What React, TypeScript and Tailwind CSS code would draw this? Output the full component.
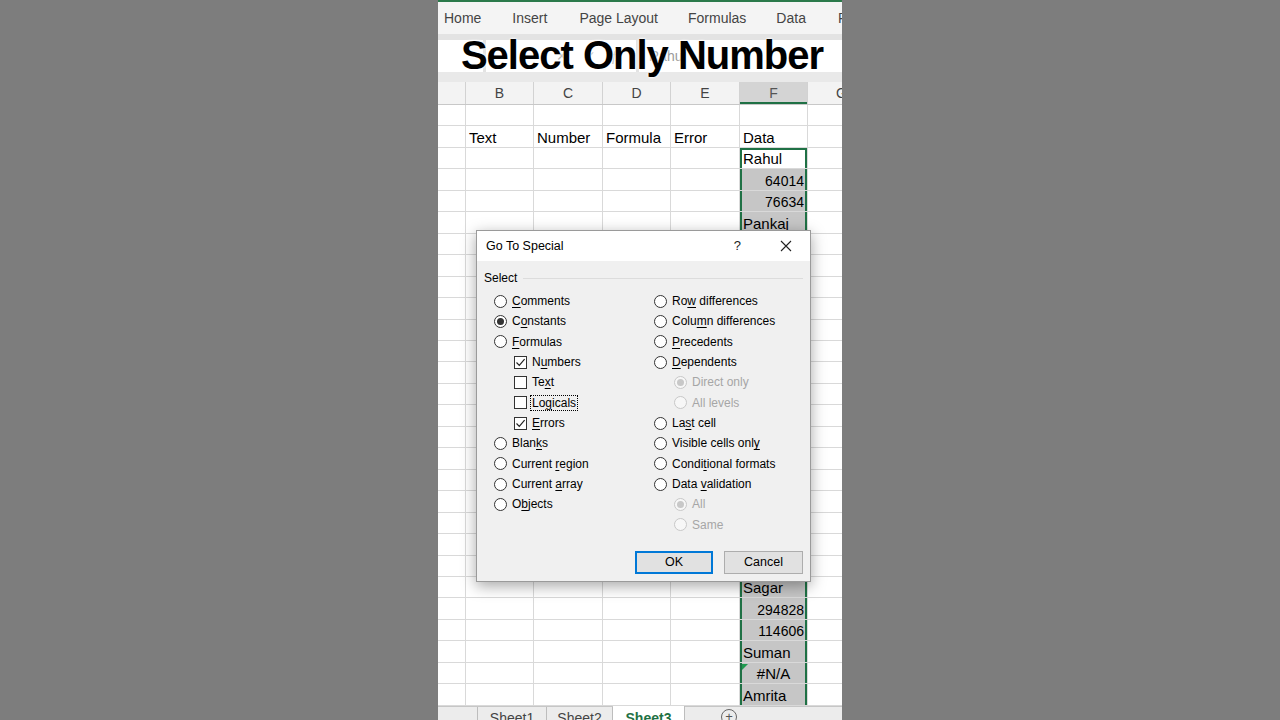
import React from 'react';

const COLS = [28, 68, 69, 68, 69, 68, 68];
const HEADERS = ['', 'B', 'C', 'D', 'E', 'F', 'G'];
const ROW_H = 'h-[21.46px]';

const F_VALUES: string[] = [
  '', 'Data', 'Rahul', '64014', '76634', 'Pankaj', '53120', '88401', 'Ramesh', '#N/A', '41230',
  'Mohan', '98112', '35508', 'Kiran', '#N/A', '72214', 'Vikas', '18876', '63004', 'Neha', '#N/A',
  'Sagar', '294828', '114606', 'Suman', '#N/A', 'Amrita',
];

const ROW1: Record<number, string> = { 1: 'Text', 2: 'Number', 3: 'Formula', 4: 'Error' };

const font = "font-['Liberation_Sans',Arial,sans-serif]";

function Radio({ checked, disabled }: { checked?: boolean; disabled?: boolean }) {
  return (
    <span
      className={`w-[13px] h-[13px] rounded-full border flex items-center justify-center flex-shrink-0 ${
        disabled ? 'border-[#c8c8c8] bg-[#f7f7f7]' : 'border-[#333] bg-white'
      }`}
    >
      {checked && (
        <span className={`w-[7px] h-[7px] rounded-full ${disabled ? 'bg-[#c8c8c8]' : 'bg-[#333]'}`} />
      )}
    </span>
  );
}

function Check({ checked }: { checked?: boolean }) {
  return (
    <span className="w-[13px] h-[13px] border border-[#333] bg-white flex items-center justify-center flex-shrink-0">
      {checked && (
        <svg width="11" height="11" viewBox="0 0 11 11">
          <path d="M1.5 5.5 L4.3 8.3 L9.6 2.2" fill="none" stroke="#222" strokeWidth="1.2" />
        </svg>
      )}
    </span>
  );
}

function Label({ text, k, disabled, focus }: { text: string; k: number; disabled?: boolean; focus?: boolean }) {
  const body =
    k < 0 ? (
      text
    ) : (
      <>
        {text.slice(0, k)}
        <u className="underline decoration-1 underline-offset-2">{text[k]}</u>
        {text.slice(k + 1)}
      </>
    );
  return (
    <span
      className={`text-[12px] leading-[14px] whitespace-nowrap ${disabled ? 'text-[#a6a6a6]' : 'text-black'} ${
        focus ? 'outline-1 outline-dotted outline-black outline-offset-0 px-[1px] -ml-[1px]' : ''
      }`}
    >
      {body}
    </span>
  );
}

type Opt = { t: string; k: number; kind: 'radio' | 'check'; on?: boolean; dis?: boolean; indent?: boolean; focus?: boolean };

const LEFT: Opt[] = [
  { t: 'Comments', k: 0, kind: 'radio' },
  { t: 'Constants', k: 1, kind: 'radio', on: true },
  { t: 'Formulas', k: 0, kind: 'radio' },
  { t: 'Numbers', k: 1, kind: 'check', on: true, indent: true },
  { t: 'Text', k: 2, kind: 'check', indent: true },
  { t: 'Logicals', k: 2, kind: 'check', indent: true, focus: true },
  { t: 'Errors', k: 0, kind: 'check', on: true, indent: true },
  { t: 'Blanks', k: 4, kind: 'radio' },
  { t: 'Current region', k: 8, kind: 'radio' },
  { t: 'Current array', k: 8, kind: 'radio' },
  { t: 'Objects', k: 1, kind: 'radio' },
];

const RIGHT: Opt[] = [
  { t: 'Row differences', k: 2, kind: 'radio' },
  { t: 'Column differences', k: 4, kind: 'radio' },
  { t: 'Precedents', k: 0, kind: 'radio' },
  { t: 'Dependents', k: 0, kind: 'radio' },
  { t: 'Direct only', k: -1, kind: 'radio', on: true, dis: true, indent: true },
  { t: 'All levels', k: -1, kind: 'radio', dis: true, indent: true },
  { t: 'Last cell', k: 2, kind: 'radio' },
  { t: 'Visible cells only', k: 17, kind: 'radio' },
  { t: 'Conditional formats', k: 5, kind: 'radio' },
  { t: 'Data validation', k: 5, kind: 'radio' },
  { t: 'All', k: -1, kind: 'radio', on: true, dis: true, indent: true },
  { t: 'Same', k: -1, kind: 'radio', dis: true, indent: true },
];

function OptionList({ items }: { items: Opt[] }) {
  return (
    <div className="flex flex-col">
      {items.map(o => (
        <div key={o.t} className={`h-[20.33px] flex items-center gap-[5px] ${o.indent ? 'pl-[20px]' : ''}`}>
          {o.kind === 'radio' ? <Radio checked={o.on} disabled={o.dis} /> : <Check checked={o.on} />}
          <Label text={o.t} k={o.k} disabled={o.dis} focus={o.focus} />
        </div>
      ))}
    </div>
  );
}

function GoToSpecial() {
  return (
    <div className={`absolute left-[38px] top-[230px] w-[335px] h-[352px] flex flex-col border border-[#9a9a9a] bg-[#f0f0f0] shadow-[0_4px_14px_rgba(0,0,0,0.35)] ${font}`}>
      <div className="h-[30px] bg-white flex items-center pl-[9px] pr-[18px]">
        <span className="text-[12.5px] text-black flex-1">Go To Special</span>
        <span className="text-[13px] text-[#222] mr-[39px]">?</span>
        <svg width="12" height="12" viewBox="0 0 12 12">
          <path d="M1 1 L11 11 M11 1 L1 11" stroke="#222" strokeWidth="1.1" />
        </svg>
      </div>
      <div className="flex-1 flex flex-col px-[7px] pt-[10px]">
        <div className="flex items-center gap-[6px]">
          <span className="text-[12px] leading-[14px] text-black">Select</span>
          <span className="flex-1 h-px bg-[#dcdcdc]" />
        </div>
        <div className="flex mt-[6px] pl-[10px]">
          <div className="w-[160px]">
            <OptionList items={LEFT} />
          </div>
          <OptionList items={RIGHT} />
        </div>
        <div className="flex justify-end gap-[11px] mt-[16px]">
          <button className="w-[78px] h-[23px] bg-[#e1e1e1] border-2 border-[#0078d7] text-[12.5px] text-black">OK</button>
          <button className="w-[79px] h-[23px] bg-[#e1e1e1] border border-[#adadad] text-[12.5px] text-black">Cancel</button>
        </div>
      </div>
    </div>
  );
}

function Cell({ col, row }: { col: number; row: number }) {
  const w = COLS[col];
  let text = '';
  if (row === 1 && ROW1[col]) text = ROW1[col];
  if (col === 5) text = F_VALUES[row] ?? '';
  const inSel = col === 5 && row >= 2;
  const active = col === 5 && row === 2;
  const isNum = /^\d+$/.test(text);
  const isErr = text.startsWith('#');
  const sel = inSel
    ? `${active ? 'bg-white shadow-[inset_2px_0_0_#1f7145,inset_-2px_0_0_#1f7145,inset_0_2px_0_#1f7145]' : 'bg-[#c6c6c6] shadow-[inset_2px_0_0_#1f7145,inset_-2px_0_0_#1f7145]'}`
    : 'bg-white';
  return (
    <div
      style={{ width: w }}
      className={`relative flex-shrink-0 h-full border-r border-b border-[#d9d9d9] flex items-center pt-[3px] overflow-hidden text-black whitespace-nowrap ${sel} ${
        isNum ? 'justify-end pr-[3px] text-[14px]' : isErr ? 'justify-center text-[15px]' : 'pl-[3px] text-[15px]'
      }`}
    >
      {isErr && (
        <span className="absolute left-[2px] top-[1px] w-0 h-0 border-t-[6px] border-t-[#1f9a4f] border-r-[6px] border-r-transparent" />
      )}
      {text}
    </div>
  );
}

export default function App() {
  const rows = Array.from({ length: 28 }, (_, i) => i);
  return (
    <div className={`w-full h-[720px] bg-[#7d7d7d] flex justify-center overflow-hidden ${font}`}>
      <div className="relative w-[404px] h-[720px] flex flex-col bg-white overflow-hidden">
        {/* Ribbon tabs */}
        <div className="h-[34px] flex-shrink-0 bg-[#f4f4f4] border-t-2 border-[#2b7a4b] flex items-center gap-[30px] pl-[6px] pt-[1px] text-[14px] text-[#444] whitespace-nowrap">
          <span>Home</span>
          <span className="ml-px">Insert</span>
          <span className="ml-[2px]">Page Layout</span>
          <span>Formulas</span>
          <span>Data</span>
          <span className="ml-[2px]">Review</span>
        </div>

        {/* Formula bar */}
        <div className="h-[6px] flex-shrink-0 bg-[#e3e3e3]" />
        <div className="h-[32px] flex-shrink-0 flex bg-[#e3e3e3] gap-[3px]">
          <div className="w-[45px] bg-white" />
          <div className="w-[150px] bg-white flex items-center justify-end gap-[16px] pr-[14px] text-[#b8b8b8] text-[14px]">
            <span>✕</span>
            <span>✓</span>
            <span className="italic font-['Liberation_Serif',serif]">fx</span>
          </div>
          <div className="flex-1 bg-white flex items-center pl-[10px] text-[14px] text-[#9a9a9a]">Rahul</div>
        </div>

        {/* Column headers */}
        <div className="h-[10px] flex-shrink-0 bg-[#e9e9e9]" />
        <div className="h-[23px] flex-shrink-0 flex bg-[#f3f3f3] border-b border-[#c8c8c8]">
          {HEADERS.map((h, i) => (
            <div
              key={i}
              style={{ width: COLS[i] }}
              className={`flex-shrink-0 h-full flex items-center justify-center text-[14px] border-r border-[#d2d2d2] ${
                h === 'F' ? 'bg-[#d4d4d4] text-[#555] shadow-[inset_0_-2px_0_#1f7145]' : 'text-[#444]'
              }`}
            >
              {h}
            </div>
          ))}
        </div>

        {/* Grid */}
        <div className="flex-1 flex flex-col overflow-hidden">
          {rows.map(r => (
            <div key={r} className={`${ROW_H} flex-shrink-0 flex`}>
              {COLS.map((_, c) => (
                <Cell key={c} col={c} row={r} />
              ))}
            </div>
          ))}
        </div>

        {/* Sheet tabs */}
        <div className="absolute left-0 right-0 top-[706px] h-[14px] bg-[#ececec] border-t border-[#c6c6c6] flex text-[14px] text-[#444] leading-[16px]">
          <div className="w-[40px] border-r border-[#bdbdbd]" />
          <div className="w-[69px] flex justify-center pt-[3px] border-r border-[#bdbdbd]">Sheet1</div>
          <div className="w-[66px] flex justify-center pt-[3px] border-r border-[#bdbdbd]">Sheet2</div>
          <div className="w-[72px] -mt-px bg-white flex justify-center pt-[4px] font-bold text-[#1f7145] border-r border-[#bdbdbd]">Sheet3</div>
          <div className="flex-1 flex pl-[36px] pt-[2px]">
            <span className="w-[16px] h-[16px] rounded-full border border-[#666] flex items-center justify-center text-[13px] text-[#555]">+</span>
          </div>
        </div>

        {/* Overlay title */}
        <div className="absolute left-0 right-0 top-[35px] flex justify-center pl-[4px] pointer-events-none">
          <span className="text-[40px] leading-[40px] font-bold text-black tracking-[-1px] whitespace-nowrap [text-shadow:0_0_3px_#fff,0_0_3px_#fff]">
            Select Only Number
          </span>
        </div>

        <GoToSpecial />
      </div>
    </div>
  );
}
